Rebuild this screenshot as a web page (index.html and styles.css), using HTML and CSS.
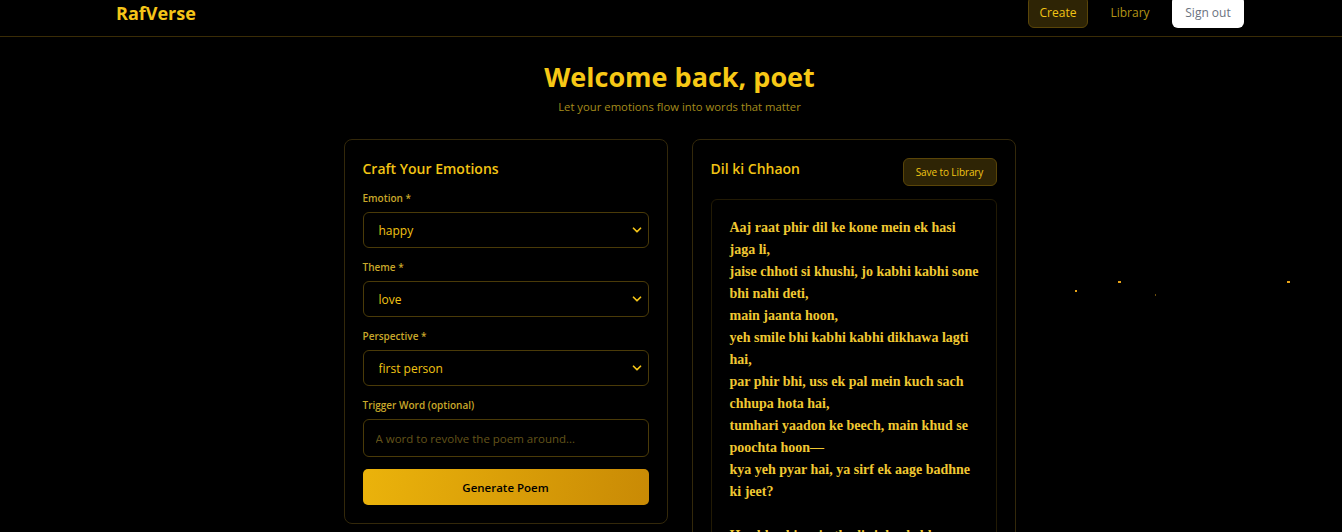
FILE: index.html
```html
<!DOCTYPE html>
<html lang="en">
<head>
<meta charset="utf-8">
<title>RafVerse</title>
<link rel="stylesheet" href="styles.css">
</head>
<body>
<header class="nav">
  <div class="nav-inner">
    <div class="logo">RafVerse</div>
    <nav class="nav-links">
      <a class="nav-btn active">Create</a>
      <a class="nav-btn plain">Library</a>
      <button class="signout">Sign out</button>
    </nav>
  </div>
</header>
<main class="main">
  <div class="hero">
    <h1>Welcome back, poet</h1>
    <p>Let your emotions flow into words that matter</p>
  </div>
  <div class="grid">
    <section class="card form-card">
      <h2>Craft Your Emotions</h2>
      <div class="field">
        <label>Emotion *</label>
        <div class="select-wrap">
          <select><option>happy</option></select>
          <svg class="chev" viewBox="0 0 24 24" width="14" height="14"><path d="M6 9l6 6 6-6" fill="none" stroke="#f5c518" stroke-width="3" stroke-linecap="round" stroke-linejoin="round"/></svg>
        </div>
      </div>
      <div class="field">
        <label>Theme *</label>
        <div class="select-wrap">
          <select><option>love</option></select>
          <svg class="chev" viewBox="0 0 24 24" width="14" height="14"><path d="M6 9l6 6 6-6" fill="none" stroke="#f5c518" stroke-width="3" stroke-linecap="round" stroke-linejoin="round"/></svg>
        </div>
      </div>
      <div class="field">
        <label>Perspective *</label>
        <div class="select-wrap">
          <select><option>first person</option></select>
          <svg class="chev" viewBox="0 0 24 24" width="14" height="14"><path d="M6 9l6 6 6-6" fill="none" stroke="#f5c518" stroke-width="3" stroke-linecap="round" stroke-linejoin="round"/></svg>
        </div>
      </div>
      <div class="field">
        <label>Trigger Word (optional)</label>
        <input type="text" placeholder="A word to revolve the poem around...">
      </div>
      <button class="generate">Generate Poem</button>
    </section>
    <section class="card poem-card">
      <div class="poem-head">
        <h2>Dil ki Chhaon</h2>
        <button class="save">Save to Library</button>
      </div>
      <div class="poem-box">
        <p class="poem">Aaj raat phir dil ke kone mein ek hasi jaga li,
jaise chhoti si khushi, jo kabhi kabhi sone bhi nahi deti,
main jaanta hoon,
yeh smile bhi kabhi kabhi dikhawa lagti hai,
par phir bhi, uss ek pal mein kuch sach chhupa hota hai,
tumhari yaadon ke beech, main khud se poochta hoon—
kya yeh pyar hai, ya sirf ek aage badhne ki jeet?

Har khushi mein thodi si dard chhupa hai,
aur har dard mein ek nayi khushi.</p>
      </div>
    </section>
  </div>
  <span class="spark s1"></span>
  <span class="spark s2"></span>
  <span class="spark s3"></span>
  <span class="spark s4"></span>
</main>
</body>
</html>
```

FILE: styles.css
```css
* { box-sizing: border-box; }
html, body { margin: 0; padding: 0; background: #000; }
body {
  font-family: "Open Sans", "Noto Sans", sans-serif;
  color: #f5c518;
  overflow: hidden;
  height: 532px;
}
.nav {
  height: 37px;
  border-bottom: 1px solid #3a2c06;
}
.nav-inner {
  width: 1128px;
  margin-left: 116px;
  height: 36px;
  display: flex;
  align-items: flex-end;
  justify-content: space-between;
  padding-bottom: 8px;
}
.logo {
  font-weight: 700;
  font-size: 18px;
  color: #f5c518;
  line-height: 24px;
  margin-bottom: 3px;
}
.nav-links {
  display: flex;
  align-items: center;
}
.nav-btn {
  font-size: 12px;
  height: 32px;
  display: flex;
  align-items: center;
  justify-content: center;
  border-radius: 6px;
  cursor: pointer;
}
.nav-btn.active {
  background: #2e2405;
  border: 1px solid #5a4508;
  color: #f2c414;
  width: 60px;
  margin-right: 12px;
}
.nav-btn.plain {
  color: #b59516;
  width: 60px;
  margin-right: 12px;
}
.signout {
  height: 32px;
  width: 72px;
  background: #fff;
  border: none;
  border-radius: 6px;
  color: #6b7280;
  font-family: inherit;
  font-size: 12px;
}
.main {
  position: relative;
  padding-left: 17px;
}
.hero {
  text-align: center;
  padding-top: 23px;
}
.hero h1 {
  margin: 0;
  font-size: 27px;
  font-weight: 700;
  line-height: 34px;
  color: #f7c815;
}
.hero p {
  margin: 5px 0 0;
  font-size: 11.3px;
  color: #a58c1c;
}
.grid {
  display: grid;
  grid-template-columns: 324px 324px;
  gap: 24px;
  justify-content: center;
  margin-top: 25px;
  align-items: start;
}
.card {
  border: 1px solid #33280a;
  border-radius: 8px;
  padding: 18px;
  background: #000;
}
.card h2 {
  margin: 0;
  font-size: 14px;
  font-weight: 600;
  color: #f2c414;
  line-height: 22px;
}
.form-card h2 { margin-bottom: 11px; }
.field { margin-bottom: 12px; }
.field label {
  display: block;
  font-size: 10px;
  font-weight: 600;
  color: #c9a82a;
  line-height: 14px;
  margin-bottom: 7px;
}
.select-wrap { position: relative; }
select, input {
  display: block;
  width: 100%;
  height: 36px;
  background: #000;
  border: 1px solid #4a3a08;
  border-radius: 6px;
  color: #f2c414;
  font-family: inherit;
  font-size: 12px;
  padding: 0 15px;
  appearance: none;
  -webkit-appearance: none;
  outline: none;
}
input { height: 38px; padding: 0 12px; font-size: 11.5px; }
input::placeholder { color: #64541a; opacity: 1; }
.chev {
  position: absolute;
  right: 5px;
  top: 11px;
  pointer-events: none;
}
.generate {
  display: block;
  width: 100%;
  height: 36px;
  border: none;
  border-radius: 5px;
  background: linear-gradient(100deg, #ebb30b 0%, #c98a05 100%);
  color: #000;
  font-family: inherit;
  font-size: 11.5px;
  font-weight: 600;
  margin-top: 12px;
}
.field:last-of-type { margin-bottom: 0; }
.poem-card { padding-bottom: 0; height: 420px; }
.poem-head {
  display: flex;
  justify-content: space-between;
  align-items: flex-start;
}
.save {
  height: 28px;
  width: 94px;
  padding: 0;
  background: #2e2405;
  border: 1px solid #5a4508;
  border-radius: 6px;
  color: #f2c414;
  font-family: inherit;
  font-size: 10px;
  letter-spacing: -0.1px;
}
.poem-box {
  margin-top: 13px;
  border: 1px solid #221a04;
  border-radius: 6px;
  padding: 17px 14px 16px 18px;
  height: 400px;
}
.poem {
  margin: 0;
  white-space: pre-line;
  font-family: "Liberation Serif", "Times New Roman", serif;
  font-weight: 700;
  font-size: 14px;
  line-height: 22px;
  color: #f0c832;
}
.spark {
  position: absolute;
  width: 3px;
  height: 2px;
  background: #e8a317;
}
.s1 { left: 1075px; top: 253px; width: 2px; }
.s2 { left: 1118px; top: 244px; }
.s3 { left: 1155px; top: 257px; width: 1px; height: 2px; background: #6b4d0a; }
.s4 { left: 1287px; top: 244px; }
```
